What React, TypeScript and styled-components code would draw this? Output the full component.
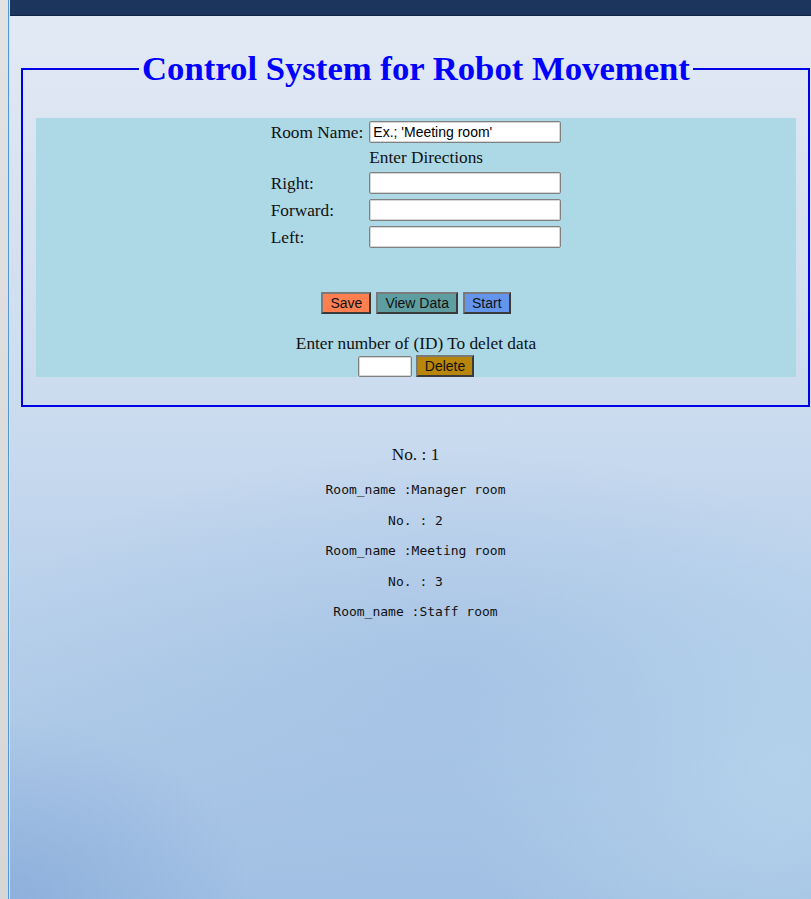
import React from "react";
import styled, { createGlobalStyle } from "styled-components";

const GlobalStyle = createGlobalStyle`
  html, body { margin: 0; padding: 0; height: 100%; overflow: hidden; }
  body { font-family: "Liberation Serif", "Times New Roman", serif; }
`;

const Frame = styled.div`
  display: flex;
  height: 899px;
  width: 811px;
  background: #e0e0e0;
`;

const SideStrip = styled.div`
  width: 8px;
  flex: none;
  background: linear-gradient(180deg, #e2e2e2, #d6d6d6);
`;

const SideLine = styled.div`
  width: 1px;
  flex: none;
  background: #4f97de;
  margin-right: 1px;
`;

const Window = styled.div`
  flex: 1;
  display: flex;
  flex-direction: column;
  min-width: 0;
  background:
    radial-gradient(ellipse 30% 20% at 0% 100%, rgba(130, 165, 215, 0.6), rgba(130, 165, 215, 0) 100%),
    radial-gradient(ellipse 60% 25% at 55% 75%, rgba(150, 185, 225, 0.45), rgba(150, 185, 225, 0) 100%),
    radial-gradient(ellipse 40% 30% at 95% 85%, rgba(190, 220, 240, 0.6), rgba(190, 220, 240, 0) 100%),
    linear-gradient(180deg, #e2ebf5 0%, #dae3f1 18%, #cbdcef 45%, #b7cfea 70%, #a0c0e3 100%);
`;

const TopBar = styled.div`
  height: 15px;
  flex: none;
  background: #1b355c;
  border-bottom: 1px solid #0f2444;
`;

const Page = styled.main`
  display: flex;
  flex-direction: column;
  padding-top: 33px;
`;

const Panel = styled.fieldset`
  margin: 0 1px 0 11px;
  padding: 0 12px 28px 13px;
  border: 2px solid #0000e6;
  min-width: 0;
`;

const Title = styled.legend`
  margin: 0 auto;
  padding: 0 3px;
  font-family: "Liberation Serif", "Times New Roman", serif;
  font-weight: bold;
  font-size: 34.7px;
  line-height: 40px;
  color: #0000ff;
`;

const FormBox = styled.div`
  margin-top: 29px;
  background: #add8e6;
  padding: 3px 0 0;
  display: flex;
  flex-direction: column;
  align-items: center;
  font-size: 17.3px;
  color: #111;
`;

const FieldGrid = styled.div`
  display: grid;
  grid-template-columns: auto 192px;
  column-gap: 6px;
  row-gap: 5px;
  align-items: center;
`;

const Label = styled.span`
  line-height: 19px;
`;

const Heading = styled.span`
  grid-column: 2;
  line-height: 19px;
`;

const TextInput = styled.input<{ $w?: number }>`
  box-sizing: border-box;
  width: ${(p) => (p.$w ? `${p.$w}px` : "192px")};
  height: ${(p) => (p.$w ? "21px" : "22px")};
  margin: 0;
  padding: 1px 3px;
  border: 1px solid #808080;
  border-radius: 2px;
  box-shadow: inset 0 0 0 1px #d6d6d6;
  background: #fff;
  font-family: "Liberation Sans", Arial, sans-serif;
  font-size: 14px;
  color: #000;
`;

const ButtonRow = styled.div`
  display: flex;
  gap: 5px;
  margin-top: 44px;
`;

const Btn = styled.button<{ $bg: string }>`
  box-sizing: border-box;
  height: 22px;
  margin: 0;
  padding: 0 7px;
  background: ${(p) => p.$bg};
  border: 2px solid;
  border-color: #7a7a7a #3a3a3a #3a3a3a #7a7a7a;
  font-family: "Liberation Sans", Arial, sans-serif;
  font-size: 14px;
  line-height: 16px;
  color: #111;
`;

const DeleteText = styled.div`
  margin-top: 20px;
  line-height: 20px;
`;

const DeleteRow = styled.div`
  display: flex;
  gap: 4px;
  align-items: center;
  margin-top: 1px;
`;

const Results = styled.section`
  margin: 38px 1px 0 11px;
  display: flex;
  flex-direction: column;
  align-items: center;
  gap: 13px;
  color: #111;
`;

const SerifLine = styled.div`
  font-family: "Liberation Serif", "Times New Roman", serif;
  font-size: 17.3px;
  line-height: 20px;
  margin-bottom: 3px;
`;

const MonoLine = styled.div`
  font-family: "DejaVu Sans Mono", "Liberation Mono", monospace;
  font-size: 13px;
  line-height: 17.5px;
  white-space: pre;
`;

const rooms = [
  { id: 1, name: "Manager room" },
  { id: 2, name: "Meeting room" },
  { id: 3, name: "Staff room" },
];

export default function App() {
  return (
    <>
      <GlobalStyle />
      <Frame>
        <SideStrip />
        <SideLine />
        <Window>
          <TopBar />
          <Page>
            <Panel>
              <Title>Control System for Robot Movement</Title>
              <FormBox>
                <FieldGrid>
                  <Label>Room Name:</Label>
                  <TextInput defaultValue="Ex.; 'Meeting room'" />
                  <Heading>Enter Directions</Heading>
                  <Label>Right:</Label>
                  <TextInput />
                  <Label>Forward:</Label>
                  <TextInput />
                  <Label>Left:</Label>
                  <TextInput />
                </FieldGrid>
                <ButtonRow>
                  <Btn $bg="#ff7f50">Save</Btn>
                  <Btn $bg="#5f9ea0">View Data</Btn>
                  <Btn $bg="#6495ed">Start</Btn>
                </ButtonRow>
                <DeleteText>Enter number of (ID) To delet data</DeleteText>
                <DeleteRow>
                  <TextInput $w={54} />
                  <Btn $bg="#b8860b">Delete</Btn>
                </DeleteRow>
              </FormBox>
            </Panel>
            <Results>
              {rooms.map((r, i) =>
                <React.Fragment key={r.id}>
                  {i === 0 ? (
                    <SerifLine>No. : {r.id}</SerifLine>
                  ) : (
                    <MonoLine>No. : {r.id}</MonoLine>
                  )}
                  <MonoLine>Room_name :{r.name}</MonoLine>
                </React.Fragment>
              )}
            </Results>
          </Page>
        </Window>
      </Frame>
    </>
  );
}
